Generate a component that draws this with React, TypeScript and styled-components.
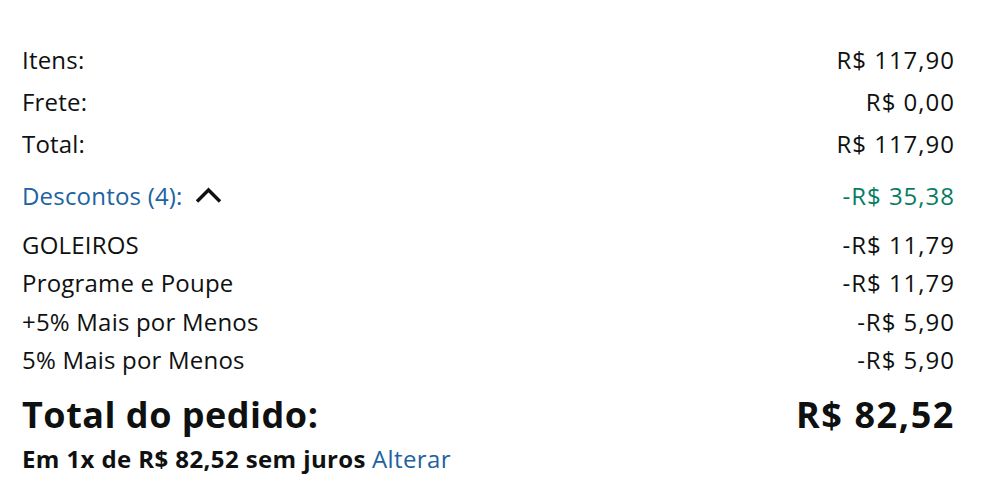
import React from "react";
import styled, { createGlobalStyle } from "styled-components";

const Global = createGlobalStyle`
  html, body { margin: 0; padding: 0; background: #fff; }
  body { font-family: "Open Sans", "Noto Sans", Arial, sans-serif; color: #0F1111; }
`;

const Panel = styled.div`
  padding: 38px 28px 0 22px;
  display: flex;
  flex-direction: column;
`;

const Row = styled.div<{ $h: number; $mt?: number }>`
  display: flex;
  justify-content: space-between;
  align-items: center;
  height: ${(p) => p.$h}px;
  margin-top: ${(p) => p.$mt ?? 0}px;
  font-size: 24px;
`;

const Label = styled.span<{ $link?: boolean }>`
  color: ${(p) => (p.$link ? "#2162A1" : "#0F1111")};
  display: inline-flex;
  align-items: center;
  gap: 12px;
  letter-spacing: 0.2px;
`;

const Amount = styled.span<{ $green?: boolean }>`
  color: ${(p) => (p.$green ? "#067D62" : "#0F1111")};
  letter-spacing: 1px;
`;

const List = styled.div`
  display: flex;
  flex-direction: column;
  margin-top: 9px;
`;

const GrandRow = styled.div`
  display: flex;
  justify-content: space-between;
  align-items: center;
  height: 40px;
  margin-top: 15px;
  font-size: 36px;
  font-weight: 700;
`;

const GrandLabel = styled.span`
  letter-spacing: 0.5px;
`;

const GrandAmount = styled.span`
  letter-spacing: 1.6px;
`;

const Installments = styled.div`
  height: 32px;
  margin-top: 8px;
  display: flex;
  align-items: center;
  font-size: 24px;
  font-weight: 700;
  letter-spacing: 0.4px;
`;

const ChangeLink = styled.span`
  color: #2162A1;
  font-weight: 400;
  margin-left: 6px;
`;

const Chevron = () => (
  <svg width="27" height="16" viewBox="0 0 27 16" aria-hidden>
    <path d="M2 14.5 L13.5 3 L25 14.5" fill="none" stroke="#0F1111" strokeWidth="3.4" />
  </svg>
);

const summary = [
  ["Itens:", "R$ 117,90"],
  ["Frete:", "R$ 0,00"],
  ["Total:", "R$ 117,90"],
];

const discounts = [
  ["GOLEIROS", "-R$ 11,79"],
  ["Programe e Poupe", "-R$ 11,79"],
  ["+5% Mais por Menos", "-R$ 5,90"],
  ["5% Mais por Menos", "-R$ 5,90"],
];

export default function App() {
  return (
    <>
      <Global />
      <Panel>
        {summary.map(([l, v]) => (
          <Row key={l} $h={42}>
            <Label>{l}</Label>
            <Amount>{v}</Amount>
          </Row>
        ))}
        <Row $h={42} $mt={10}>
          <Label $link>
            Descontos (4):
            <Chevron />
          </Label>
          <Amount $green>-R$ 35,38</Amount>
        </Row>
        <List>
          {discounts.map(([l, v]) => (
            <Row key={l} $h={38.5}>
              <Label>{l}</Label>
              <Amount>{v}</Amount>
            </Row>
          ))}
        </List>
        <GrandRow>
          <GrandLabel>Total do pedido:</GrandLabel>
          <GrandAmount>R$ 82,52</GrandAmount>
        </GrandRow>
        <Installments>
          Em 1x de R$ 82,52 sem juros
          <ChangeLink>Alterar</ChangeLink>
        </Installments>
      </Panel>
    </>
  );
}
